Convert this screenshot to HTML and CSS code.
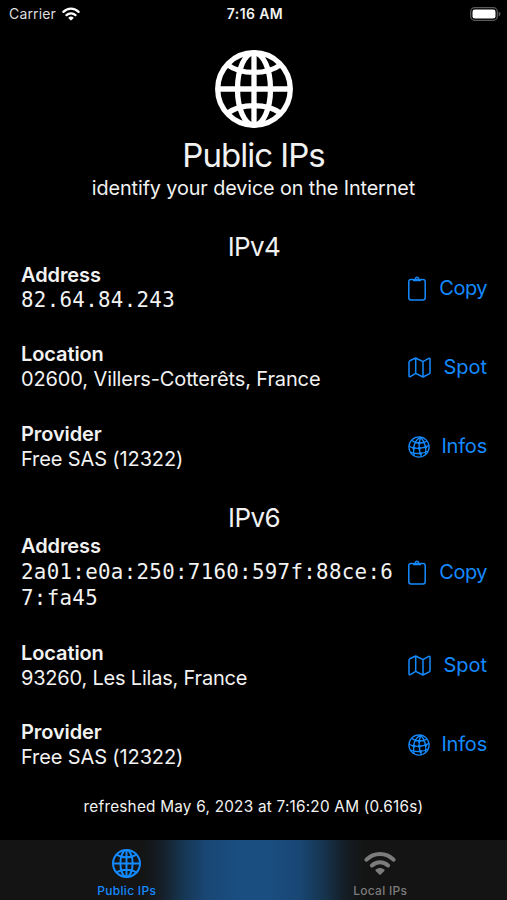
FILE: index.html
```html
<!DOCTYPE html>
<html lang="en">
<head>
<meta charset="utf-8">
<title>Public IPs</title>
<link rel="stylesheet" href="styles.css">
</head>
<body>
<svg class="defs" width="0" height="0" aria-hidden="true">
  <symbol id="globe" viewBox="0 0 78 78">
    <g fill="none" stroke="currentColor" stroke-width="5.300">
      <circle cx="39" cy="39" r="36.300"/>
      <ellipse cx="39" cy="39" rx="16.500" ry="36.200"/>
      <path d="M39 3V75M3 39H75M12 14.500C26 25 52 25 66 14.500M12 63.500C26 53 52 53 66 63.500"/>
    </g>
  </symbol>
  <symbol id="wifi" viewBox="0 0 32 24">
    <g fill="none" stroke="currentColor" stroke-width="4" stroke-linecap="round">
      <path d="M2.500 8.200C10 .5 22 .5 29.500 8.200M8 14C12.500 9.700 19.500 9.700 24 14"/>
    </g>
    <path fill="currentColor" d="M11.700 18C14 15.900 18 15.900 20.300 18Q21 18.700 20.300 19.400L16.700 23Q16 23.600 15.300 23L11.700 19.400Q11 18.700 11.700 18Z"/>
  </symbol>
  <symbol id="clipboard" viewBox="0 0 18 25">
    <path fill="none" stroke="currentColor" stroke-width="1.500" d="M5 3.500H3Q.8 3.500 .8 5.700V21.800Q.8 24 3 24H15Q17.200 24 17.200 21.800V5.700Q17.200 3.500 15 3.500H13"/>
    <path fill="currentColor" fill-rule="evenodd" d="M5.500 5.200Q4.900 5.200 4.900 4.500V3.900Q4.900 2.700 6 2.700H6.700Q7 .4 9 .4T11.300 2.700H12Q13.100 2.700 13.100 3.900V4.500Q13.100 5.200 12.500 5.200ZM9 1.700A.7 .7 0 1 0 9 3.100A.7 .7 0 1 0 9 1.700Z"/>
  </symbol>
  <symbol id="map" viewBox="0 0 23 21">
    <path fill="none" stroke="currentColor" stroke-width="1.500" stroke-linejoin="round" d="M1 5.300Q1 4.300 1.800 3.800L7.700 1L15 4.600L20.700 1.400Q22 .9 22 2.200V15.500Q22 16.400 21.200 16.900L15 20L7.700 16.400L2.300 19.600Q1 20.100 1 18.800ZM7.700 1V16.400M15 4.600V20"/>
  </symbol>
  <symbol id="net" viewBox="0 0 22 22">
    <g fill="none" stroke="currentColor" stroke-width="1.300">
      <circle cx="11" cy="11" r="10.100"/>
      <path d="M12.800 1.200C7 4 4.600 11 6.200 19.800M12.800 1.200C10.500 7 10.500 14 13.500 20.700M12.800 1.200C17 6 18.600 11 17.600 18.500M3.500 4.200C7 7.500 15 7.800 19.300 5M1 10.200C7 13.600 16 12.500 21 9.400M2.400 16.200C7 18.200 15 18 20 15"/>
    </g>
    <g fill="currentColor"><circle cx="11.200" cy="7" r="1.600"/><circle cx="5.900" cy="12.100" r="1.600"/><circle cx="11.300" cy="12.300" r="1.500"/><circle cx="17.800" cy="11" r="1.500"/><circle cx="12.500" cy="17.500" r="1.500"/></g>
  </symbol>
</svg>

<header class="status">
  <div class="carrier"><span>Carrier</span><svg class="status-wifi"><use href="#wifi"/></svg></div>
  <div class="clock">7:16 AM</div>
  <svg class="battery" viewBox="0 0 31 14">
    <rect x=".7" y=".7" width="26.600" height="12.600" rx="4" fill="none" stroke="#5a5a5a" stroke-width="1.300"/>
    <rect x="2.500" y="2.500" width="23" height="9" rx="2.300" fill="#fff"/>
    <path d="M28.700 4.600Q30.500 5.300 30.500 7T28.700 9.400Z" fill="#5a5a5a"/>
  </svg>
</header>

<main>
  <section class="hero">
    <svg class="hero-icon"><use href="#globe"/></svg>
    <h1><span>Public IPs</span></h1>
    <p><span>identify your device on the Internet</span></p>
  </section>

  <section class="group">
    <h2><span>IPv4</span></h2>
    <div class="row">
      <div class="info"><h3>Address</h3><p class="mono">82.64.84.243</p></div>
      <a class="action"><svg class="i-clip"><use href="#clipboard"/></svg><span class="copy">Copy</span></a>
    </div>
    <div class="row">
      <div class="info"><h3>Location</h3><p>02600, Villers-Cotterêts, France</p></div>
      <a class="action"><svg class="i-map"><use href="#map"/></svg><span class="spot">Spot</span></a>
    </div>
    <div class="row">
      <div class="info"><h3>Provider</h3><p>Free SAS (12322)</p></div>
      <a class="action"><svg class="i-net"><use href="#net"/></svg><span class="infos">Infos</span></a>
    </div>
  </section>

  <section class="group">
    <h2><span>IPv6</span></h2>
    <div class="row">
      <div class="info"><h3>Address</h3><p class="mono long">2a01:e0a:250:7160:597f:88ce:67:fa45</p></div>
      <a class="action"><svg class="i-clip"><use href="#clipboard"/></svg><span class="copy">Copy</span></a>
    </div>
    <div class="row">
      <div class="info"><h3>Location</h3><p class="place">93260, Les Lilas, France</p></div>
      <a class="action"><svg class="i-map"><use href="#map"/></svg><span class="spot">Spot</span></a>
    </div>
    <div class="row">
      <div class="info"><h3>Provider</h3><p>Free SAS (12322)</p></div>
      <a class="action"><svg class="i-net"><use href="#net"/></svg><span class="infos">Infos</span></a>
    </div>
  </section>

  <p class="refreshed">refreshed May 6, 2023 at 7:16:20 AM (0.616s)</p>
</main>

<nav class="tabs">
  <a class="tab active"><svg class="tab-globe"><use href="#globe"/></svg><span>Public IPs</span></a>
  <a class="tab"><svg class="tab-wifi"><use href="#wifi"/></svg><span>Local IPs</span></a>
</nav>
</body>
</html>
```

FILE: styles.css
```css
* { box-sizing: border-box; margin: 0; padding: 0; }

body {
  width: 507px;
  height: 900px;
  overflow: hidden;
  display: flex;
  flex-direction: column;
  background: #000;
  color: #f2f2f2;
  font-family: Inter, "Liberation Sans", sans-serif;
  font-size: 20px;
}

.defs { position: absolute; }
svg { display: block; flex: none; }
h1, h2 { font-weight: 400; text-align: center; }

.status {
  height: 28px;
  padding: 0 6px 0 9px;
  display: grid;
  grid-template-columns: 1fr auto 1fr;
  align-items: center;
  font-size: 14px;
  line-height: 28px;
}
.carrier { display: flex; align-items: center; gap: 6px; letter-spacing: .15px; color: #ddd; }
.status-wifi { width: 18px; height: 14px; color: #fff; }
.clock { font-weight: 600; font-size: 14px; letter-spacing: .4px; }
.battery { width: 31px; height: 14px; justify-self: end; }

main { flex: 1; }

.hero { padding-top: 22px; text-align: center; }
.hero-icon { width: 78px; height: 78px; margin: 0 auto; color: #fff; }
h1 { margin-top: 5.500px; font-size: 33px; line-height: 42px; letter-spacing: -1px; }
.hero p { margin-top: .5px; font-size: 19.800px; line-height: 25px; letter-spacing: -.1px; }

.group { padding: 0 20px 0 21px; }
.hero + .group { margin-top: 30px; }
.group + .group { margin-top: 30.300px; }
h2 { font-size: 26px; line-height: 32px; letter-spacing: -.6px; }

.row { display: flex; align-items: center; justify-content: space-between; }
.row + .row { margin-top: 29.300px; }
.info { width: 376px; }
h3 { font-size: 20px; font-weight: 600; line-height: 25px; letter-spacing: -.1px; }
.info p { line-height: 25px; white-space: nowrap; letter-spacing: -.12px; }
.info .place { letter-spacing: -.2px; }
.info .mono { font-family: "DejaVu Sans Mono", monospace; font-size: 20.800px; letter-spacing: .31px; }
.info .long { line-height: 26.200px; white-space: normal; word-break: break-all; }

.action { width: 79px; display: flex; align-items: center; justify-content: space-between; color: #148aff; line-height: 25px; }
.copy { letter-spacing: -.5px; }
.infos { letter-spacing: -.2px; }
.i-clip { width: 18px; height: 25px; }
.i-map { width: 23px; height: 21px; }
.i-net { width: 22px; height: 22px; }

.refreshed { margin-top: 27.500px; font-size: 15.300px; line-height: 20px; text-align: center; letter-spacing: .24px; }

.tabs {
  height: 60px;
  display: grid;
  grid-template-columns: 1fr 1fr;
  background: linear-gradient(90deg, #141414 0, #141414 142px, #151d25 160px, #163550 182px, #194673 205px, #1a4d80 235px, #1a4d80 272px, #194673 300px, #163550 323px, #151d25 345px, #141414 365px);
}
.tab { padding-top: 9px; display: flex; flex-direction: column; align-items: center; color: #7c7c7c; font-size: 12px; font-weight: 500; line-height: 16px; letter-spacing: .3px; }
.tab.active { color: #148aff; }
.tab svg { height: 29px; }
.tab-globe { width: 29px; }
.tab-wifi { width: 32px; }
.tab span { margin-top: 5px; }
```
